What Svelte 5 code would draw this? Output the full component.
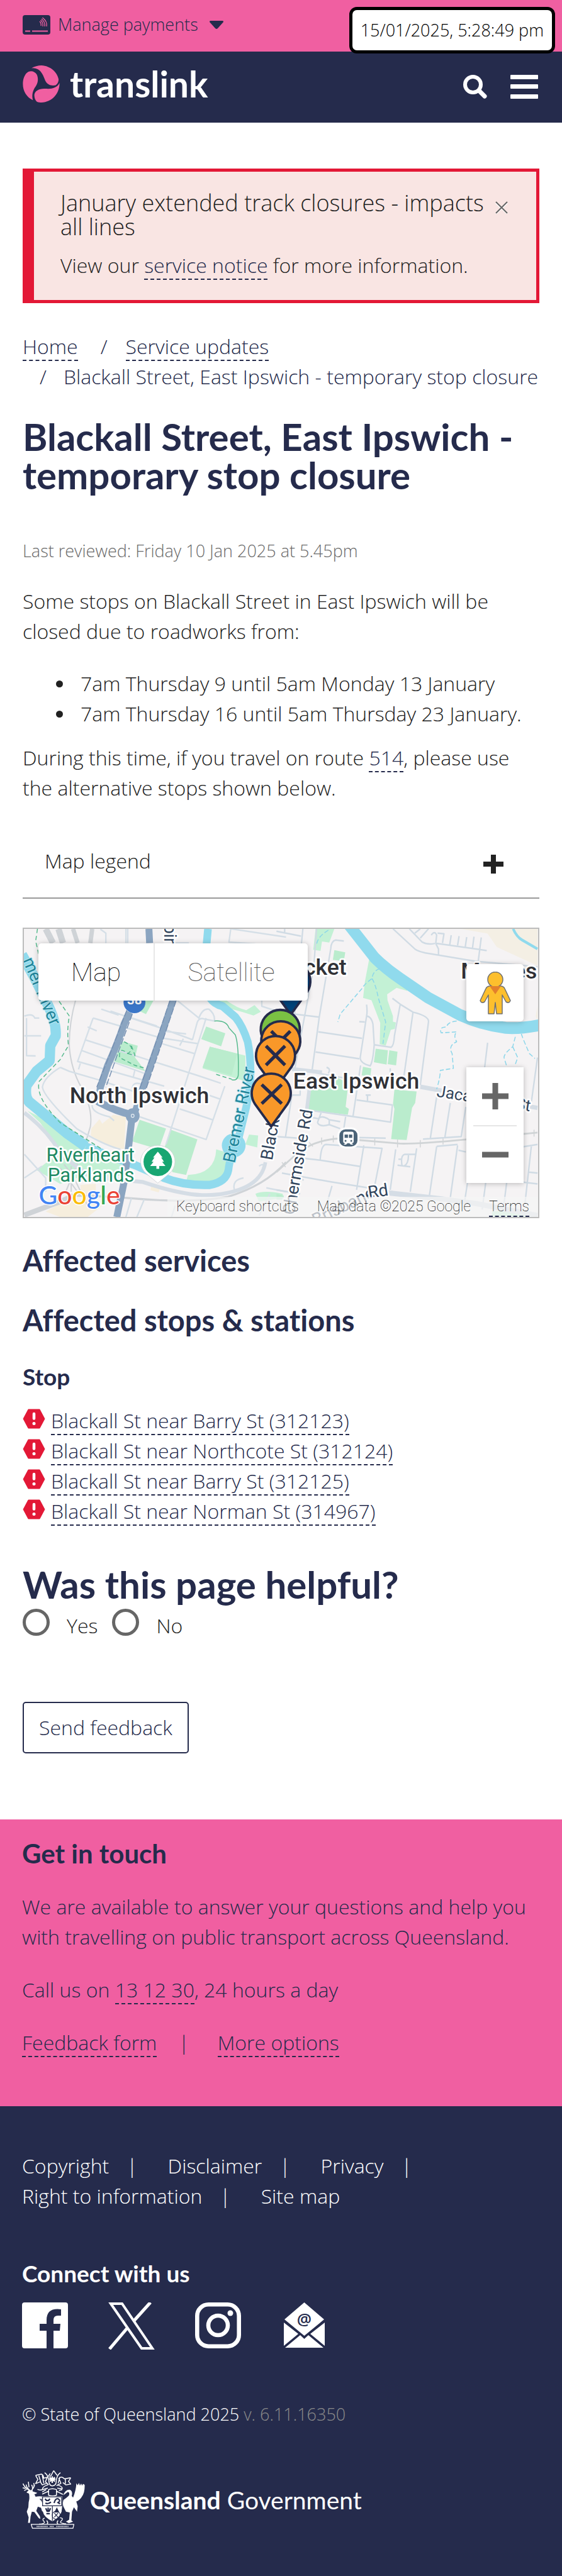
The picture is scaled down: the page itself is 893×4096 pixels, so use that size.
<script>
  let answer = $state('');
  let legendOpen = $state(false);

  const periods = [
    '7am Thursday 9 until 5am Monday 13 January',
    '7am Thursday 16 until 5am Thursday 23 January.'
  ];
  const stops = [
    'Blackall St near Barry St (312123)',
    'Blackall St near Northcote St (312124)',
    'Blackall St near Barry St (312125)',
    'Blackall St near Norman St (314967)'
  ];
  const legal = ['Copyright', 'Disclaimer', 'Privacy', 'Right to information', 'Site map'];
  const pin = 'M0 70 L-34 23 A41 41 0 1 1 34 23 Z';
</script>

<div class="page">
  <div class="topbar">
    <button class="payments" type="button">
      <svg width="44" height="31" viewBox="0 0 44 31" aria-hidden="true">
        <rect width="44" height="31" rx="4" fill="#252b4c" />
        <path d="M4 25.500h8M15 25.500h25" stroke="#f05fa1" stroke-width="2" />
        <path d="M27 10q3 3 2 7M28.500 8q4.500 4 3.500 10M30 6q6 5 5 12M31.500 4q8 6 6.500 14" fill="none" stroke="#f05fa1" stroke-width="1.300" />
      </svg>
      <span>Manage payments</span>
      <svg class="caret" width="22" height="13" viewBox="0 0 22 13" aria-hidden="true">
        <path d="M2 0h18q3 0 1.500 2.500L13 12q-2 2-4 0L.500 2.500Q-1 0 2 0z" fill="#252b4c" />
      </svg>
    </button>
    <div class="timestamp">15/01/2025, 5:28:49 pm</div>
  </div>

  <header class="header">
    <a class="brand" href="#home">
      <svg width="59" height="59" viewBox="48 137 77 78" aria-hidden="true">
        <g fill="#f05fa1">
          <path d="M66 143C72 139 80 137 87 137C106 138 120 151 123 166C123 172 120 178 115 179C106 180 99 177 95 169C91 159 88 150 79 145Q73 142 66 143z" />
          <path d="M55 154C62 146 73 149 77 156C81 164 80 174 75 181C69 189 66 199 69 210C56 204 48 191 48 176C48 166 51 159 55 154z" />
          <path d="M125 174C120 184 109 187 96 186C83 185 73 190 72 199C72 205 74 210 77 213C81 215 84 215 87 215C109 214 125 197 125 174z" />
        </g>
      </svg>
      <span>translink</span>
    </a>
    <div class="tools">
      <button type="button" aria-label="Search">
        <svg width="38" height="38" viewBox="0 0 38 38" aria-hidden="true">
          <circle cx="15.500" cy="15.500" r="12.500" fill="none" stroke="#fff" stroke-width="6" />
          <path d="M25 25L34 34" stroke="#fff" stroke-width="7" stroke-linecap="round" />
        </svg>
      </button>
      <button type="button" aria-label="Menu">
        <svg width="44" height="38" viewBox="0 0 44 38" aria-hidden="true">
          <g fill="#fff"><rect width="44" height="7" rx="1" /><rect y="15" width="44" height="7" rx="1" /><rect y="31" width="44" height="7" rx="1" /></g>
        </svg>
      </button>
    </div>
  </header>

  <main>
    <section class="alert">
      <div class="alert-body">
        <h2>January extended track closures - impacts all lines</h2>
        <p>View our <a href="#notice">service notice</a> for more information.</p>
      </div>
      <button type="button" aria-label="Close">
        <svg width="20" height="20" viewBox="0 0 20 20" aria-hidden="true">
          <path d="M1 3L19 20M19 3L1 20" stroke="#fff" stroke-width="2" />
          <path d="M1 1L19 19M19 1L1 19" stroke="#666" stroke-width="2" />
        </svg>
      </button>
    </section>

    <nav aria-label="Breadcrumb">
      <ol class="crumbs">
        <li><a href="#home">Home</a></li>
        <li><a href="#updates">Service updates</a></li>
        <li>Blackall Street, East Ipswich - temporary stop closure</li>
      </ol>
    </nav>

    <h1>Blackall Street, East Ipswich - temporary stop closure</h1>
    <p class="reviewed">Last reviewed: Friday 10 Jan 2025 at 5.45pm</p>
    <p class="intro">Some stops on Blackall Street in East Ipswich will be closed due to roadworks from:</p>
    <ul class="periods">
      {#each periods as period}
        <li>{period}</li>
      {/each}
    </ul>
    <p class="detour">During this time, if you travel on route <a href="#route514">514</a>, please use the alternative stops shown below.</p>

    <button class="legend" type="button" aria-expanded={legendOpen} onclick={() => (legendOpen = !legendOpen)}>
      <span>Map legend</span>
      <svg width="32" height="30" viewBox="0 0 32 30" aria-hidden="true">
        <path d="M4 15H28M16 4V26" stroke="#222" stroke-width="8" stroke-linecap="square" stroke-linejoin="round" />
      </svg>
    </button>

    <div class="map">
      <svg class="canvas" viewBox="50 1950 1079 605" preserveAspectRatio="xMidYMid slice" role="img" aria-label="Map of North Ipswich and East Ipswich">
        <rect x="50" y="1950" width="1079" height="605" fill="#f5f3f4" />

        <g transform="translate(0 1930) scale(.3827 .4146)" fill="none" stroke-linejoin="round">
          <g fill="#c3f1d5">
            <path d="M150 970L260 1020L370 1100L500 1170L660 1240L740 1290L560 1310L450 1300L330 1340L200 1270L300 1200L290 1120L220 1030z" />
            <path d="M1030 1295Q1180 1290 1185 1165L1240 1180L1260 1290Q1200 1350 1020 1330z" />
            <path d="M1140 400L1240 410Q1300 450 1350 460L1395 435L1430 468L1390 487L1330 470L1250 450z" />
            <path d="M1365 1090L1415 1095L1410 1155L1345 1140z" />
            <path d="M1150 645L1345 690L1345 820L1110 755z" />
            <path d="M1400 1390Q1450 1370 1550 1390V1410L1420 1430z" />
          </g>
          <g fill="#baeccd">
            <path d="M1130 543L1235 577L1212 643L1103 607z" />
            <path d="M665 617L755 640L740 700L798 770L625 720z" />
            <path d="M780 410H842L800 480L765 465z" />
            <path d="M765 1015L910 1060L870 1165L725 1125z" />
            <path d="M935 1065L1082 1115L1020 1295L945 1280L900 1160z" />
            <path d="M1150 645L1300 680L1270 790L1110 750z" />
          </g>
          <path fill="#f6eedd" d="M545 1012L560 1035L620 990L690 1000L680 1165L590 1145L497 1095L500 1060z" />
          <path fill="#f6eedd" d="M440 1345L525 1340V1400L480 1430L560 1450L480 1508H330L250 1480L330 1440L450 1420zM830 1345L880 1352L870 1383L825 1372z" />
          <g stroke="#cfd3d7">
            <path stroke-width="34" d="M250 48L290 120M320 48L345 120" />
            <path stroke-width="24" d="M400 48L425 120M505 48L495 120" />
            <path stroke-width="7" d="M415 405Q375 540 380 650Q390 760 445 850Q510 960 495 1050Q470 1130 450 1180L360 1380M330 1260L440 1400M390 1250V1380M350 1240L400 1300L480 1450" />
            <path stroke-width="26" d="M133 1498L330 1430L400 1400" />
            <path stroke-width="10" d="M400 1400Q560 1400 720 1413Q1050 1440 1250 1405Q1450 1350 1568 1230" />
          </g>
          <g stroke="#d5dfe7" stroke-width="8">
            <path d="M510 500L880 600L1085 630L1010 850M510 500L425 720L900 845M605 465L880 550L1055 610M690 490L860 540M480 545L530 565M465 610L840 720L1080 790L1210 830M450 665L790 780M555 455L650 485M1085 630L1130 500M970 410L1090 500Q1110 450 1145 455Q1180 480 1175 515L1120 505Q1090 495 1080 525L1055 610M985 640L1005 605M1065 680L890 630M1020 580L890 565" />
            <path d="M740 760L730 800M725 855Q730 815 790 840M330 750Q240 800 232 850Q240 900 420 1060Q560 1140 660 1165M330 750L380 770L530 810L760 880M440 730L430 760M505 940Q500 980 600 1000L625 1020" />
            <path d="M765 1000L1130 1115L1232 845M910 1140L1010 850M985 960L1165 1015M1080 870L1205 910M133 490Q180 475 190 500H215M145 500V690L195 692M133 590L225 590" />
            <path d="M550 50L580 70V120M690 48V120M700 48V120M940 120H1035M1265 48L1255 115L1400 125M1265 48L1568 90M133 1190L250 1310V1380M133 1310L230 1250M1435 410V440L1568 480" />
            <path d="M720 1413L690 1508M790 1420L750 1508M960 1450L940 1508M1285 1370Q1270 1320 1335 1310M1460 1360L1568 1380M1420 1500L1480 1390M1440 1260Q1450 1230 1420 1250" />
          </g>
          <path stroke="#d5dde5" stroke-width="20" d="M133 980Q250 1060 330 1180Q440 1290 560 1310L780 1330Q1040 1410 1180 1395Q1430 1370 1455 1230" />
          <g stroke="#90daed" stroke-linejoin="round">
            <path stroke-width="56" d="M120 180Q200 310 260 430Q310 520 305 590L275 640L272 715L200 770L145 840Q135 900 160 925L370 1085L470 1150" />
            <path stroke-width="42" d="M470 1150Q600 1200 740 1245L900 1310Q1010 1350 1150 1345Q1240 1330 1252 1270Q1260 1200 1310 1100L1350 950L1370 850Q1380 720 1358 620Q1330 540 1290 495L1220 440Q1130 420 1115 300L1140 48" />
          </g>
          <ellipse cx="1281" cy="1145" rx="65" ry="60" fill="#90daed" />
          <g stroke="#54b98c" stroke-width="5" stroke-dasharray="22 14">
            <path d="M205 48L195 110L225 230L320 410L380 490Q365 560 375 640Q335 700 330 710L215 820Q190 900 330 1030L560 1165" />
            <path d="M680 620Q750 650 700 680Q650 640 655 700L740 740L800 755M720 640L740 690L700 680M1185 785L1270 810" />
          </g>
          <path stroke="#54b98c" stroke-width="5" d="M1175 515Q1240 510 1255 550L1290 585Q1310 640 1306 790Q1300 820 1270 812" />
          <g stroke="#8ba5c1" stroke-linecap="butt">
            <path stroke-width="38" d="M816 48L820 120M710 470L680 530Q640 640 590 740L550 850L540 925Q640 975 725 990L705 1150L680 1330L640 1508" />
            <path stroke-width="36" d="M950 405L890 570L780 860L735 990" />
          </g>
          <path stroke="#7690b2" stroke-width="5" stroke-dasharray="34 10" d="M695 460L610 665L530 850M725 480L645 680L580 850M932 410L830 690L765 860M966 410L860 700L800 860" />
          <circle cx="727" cy="995" r="38" fill="#8ba5c1" />
          <circle cx="727" cy="995" r="8" fill="#8ba5c1" stroke="#e8eef4" stroke-width="4" />
        </g>

        <g transform="translate(580 1930) scale(.382 .4146)" fill="none" stroke-linejoin="round">
          <path fill="#f4efe4" d="M1010 48L1160 72L1210 140L1434 235V48zM1434 440V510L1424 490z" />
          <g fill="#c3f1d5">
            <path d="M215 48H318L290 118L250 112L242 160L202 154z" />
            <path d="M510 198L570 245L650 310L720 350L718 362L660 347L608 380L610 410L640 490V518L656 522L650 555L628 560L600 640L567 632L570 525L522 410L476 398L485 320z" />
            <path d="M1185 1480L1330 1470L1434 1508H1180z" />
          </g>
          <g fill="#baeccd">
            <path d="M318 156L378 167L370 212L310 205zM545 655L612 663L605 736L535 724zM620 663L665 670L657 740L611 733zM475 747L521 755L515 800L468 790z" />
            <path d="M190 830L330 800L395 830L380 950L398 960L392 990L170 965z" />
            <path d="M648 862L770 872L762 930L745 955L715 1118L630 1113L648 960L640 935zM0 1390L40 1400V1420H0z" />
          </g>
          <g stroke="#d0dbe4" stroke-width="8">
            <path d="M145 48L100 480L235 495M0 60L135 85M45 48V70M220 48L205 240L100 760M370 110L325 105Q300 110 298 150L235 495L195 770M0 490L100 480M230 570L470 603M215 672L455 706M85 755L200 775L380 805" />
            <path d="M495 432Q500 470 495 490L460 700Q460 730 515 742Q530 720 537 635L530 530Q520 490 495 490M455 518L485 520M537 635L630 648Q645 640 648 590L680 430M637 400L680 430L750 470Q840 490 835 520L790 840M750 470L690 860M462 740L420 1000M440 915L637 940L627 1027L170 965M500 890V925M490 890H518M380 1000L370 1060M50 1100L85 890L130 890V850M625 755V800M275 750Q300 755 285 780" />
            <path d="M640 48L760 150Q780 165 850 175L1090 212L1434 240M730 48L800 115Q830 130 870 122M760 70L790 48M790 95L835 48M850 80Q870 55 880 80L875 122L890 150V180M885 70L920 73L912 120M878 122L1155 158M960 80L952 128M1003 85L995 132M1045 90L1037 140M1085 88L1077 145M1125 92L1108 215" />
            <path d="M955 930L925 1105M1040 950L1015 1100L805 1113M880 900L845 1110M1160 625L1120 930M1434 700L1395 960M0 1100L180 1112M270 1140L580 1160L535 1370M480 1145L440 1370M270 1140Q245 1145 240 1220L150 1210M240 1220L460 1252M30 1285L300 1330L640 1380M305 1350L280 1430M0 1370L130 1390M150 1320L90 1310M600 1108L450 1105M655 1165L625 1370M770 1160L735 1380M880 1150L840 1400M995 1145L955 1410M880 1150L995 1140M1000 1170L1040 1178M1050 1330L1035 1420M1150 1330L1130 1470M1265 1330L1250 1440M1400 1150L1365 1440M1300 1160L1434 1140M1385 1280L1434 1285M1340 1330L1434 1340" />
            <path d="M665 1245L735 1253M690 1250Q680 1195 705 1190L765 1190M725 1195Q725 1240 700 1250M670 1215H690M180 1000L230 1010Q250 990 290 1015L350 1025M225 1030Q240 1055 290 1040L350 1060M245 980L225 1030M290 1015V1040" />
          </g>
          <g stroke="#d5dde5">
            <path stroke-width="20" d="M170 965L155 990M180 865L155 1050M85 758L250 775" />
            <path stroke-width="22" d="M790 848L920 870L1434 955" />
            <path stroke-width="26" d="M610 1385L900 1415L1100 1440L1434 1500" />
          </g>
          <path stroke="#d0d4d6" stroke-width="9" d="M0 1280L120 1180Q220 1115 350 1110L680 1136Q780 1138 1040 1115L1434 1080" />
          <path stroke="#d0d4d6" stroke-width="5" d="M248 1105V1140M312 1095V1130M540 1110V1145M665 1115V1155M790 1118V1155M915 1110V1140M1415 1065V1100M30 1230L50 1255M180 1130L200 1150" />
          <path stroke="#90daed" stroke-width="60" d="M395 25L540 195Q600 250 680 300L830 395L1010 485Q1130 535 1260 550Q1340 555 1450 535" />
          <path stroke="#90daed" stroke-width="14" d="M1300 48Q1320 90 1350 105L1434 150" />
          <g stroke="#8bd6ea" stroke-width="5" stroke-dasharray="24 12">
            <path d="M567 250Q530 260 525 300Q480 330 470 350L350 480L337 520M525 300Q545 330 560 400L600 520L585 630M285 55Q220 90 220 135" />
            <path d="M990 515Q940 520 935 545Q890 545 905 575L990 570Q970 590 990 620Q940 640 965 680L972 755L900 765Q900 800 880 860M1345 580Q1360 620 1390 680L1420 705M1312 595L1298 645Q1250 680 1250 700L1265 745M1298 645L1325 700L1310 740" />
          </g>
        </g>

        <g fill="#303136" stroke="#fff" stroke-width="7" stroke-linejoin="round" paint-order="stroke">
          <text x="146" y="2316" font-size="47" font-weight="500">North Ipswich</text>
          <text x="615" y="2285" font-size="47" font-weight="500">East Ipswich</text>
          <text x="727" y="2046" font-size="47" font-weight="500" text-anchor="end">Tivoli Pocket</text>
          <text x="967" y="2055" font-size="47" font-weight="500">Moores</text>
          <g fill="#1d8a63" font-size="41">
            <text x="97" y="2439">Riverheart</text>
            <text x="100" y="2481">Parklands</text>
          </g>
          <g fill="#20859a" stroke="#bfe9f3" stroke-width="3" font-size="36">
            <text transform="translate(492 2443) rotate(-78)">Bremer River</text>
            <text transform="translate(47 2016) rotate(67)">mer River</text>
          </g>
          <g fill="#32455c" font-size="36">
            <text transform="translate(571 2437) rotate(-80)">Blackall St</text>
            <text transform="translate(617 2552) rotate(-80)">Chermside Rd</text>
            <text transform="translate(662 2574) rotate(-26)">Brisbane</text>
            <text transform="translate(774 2516) rotate(-9)">Rd</text>
            <text transform="translate(915 2302) rotate(9)" font-size="34">Jacaranda St</text>
            <text transform="translate(344 1940) rotate(90)">pine</text>
          </g>
        </g>

        <circle cx="282" cy="2104" r="23" fill="#3a76c8" />
        <text x="282" y="2108" fill="#fff" font-size="27" font-weight="700" text-anchor="middle">38</text>

        <path d="M331 2484L307 2464A36 34 0 1 1 355 2464Q340 2476 331 2484z" fill="#fff" stroke="#c9cdd0" stroke-width="1" />
        <ellipse cx="331" cy="2439" rx="30" ry="30" fill="#18a672" />
        <path d="M331 2418L341 2430H338L344 2439H340L347 2448H334V2454H328V2448H315L322 2439H318L324 2430H321z" fill="#fff" />

        <rect x="710" y="2369" width="42" height="40" rx="15" fill="#4c6478" stroke="#fff" stroke-width="4" />
        <path d="M724 2376H738Q742 2376 742 2380V2396Q742 2400 738 2400L741 2403H736L733 2400H729L726 2403H721L724 2400Q720 2400 720 2396V2380Q720 2376 724 2376z" fill="#fff" />
        <path d="M723 2382H730V2389H723zM732 2382H739V2389H732z" fill="#4c6478" />
        <circle cx="725" cy="2395" r="2" fill="#4c6478" /><circle cx="737" cy="2395" r="2" fill="#4c6478" />

        <g stroke="#252b4c" stroke-width="5" stroke-linejoin="round">
          <path d={pin} transform="translate(610 2060)" fill="#00437a" />
          <path d={pin} transform="translate(588 2161)" fill="#7ac143" />
          <g transform="translate(589 2185)"><path d={pin} fill="#f99829" /><path d="M-20 -20L20 20M20 -20L-20 20" stroke-width="7" /></g>
          <g transform="translate(578 2216)"><path d={pin} fill="#f99829" /><path d="M-20 -20L20 20M20 -20L-20 20" stroke-width="7" /></g>
          <g transform="translate(569 2295)"><path d={pin} fill="#f99829" /><path d="M-20 -18L22 22M22 -18L-20 22" stroke-width="7" /></g>
        </g>

        <text x="81" y="2529" font-size="54" font-weight="500" stroke="#fff" stroke-width="4" paint-order="stroke" class="google"><tspan fill="#4285f4">G</tspan><tspan fill="#ea4335">o</tspan><tspan fill="#fbbc05">o</tspan><tspan fill="#4285f4">g</tspan><tspan fill="#34a853">l</tspan><tspan fill="#ea4335">e</tspan></text>
      </svg>

      <div class="maptype">
        <button type="button" class="on">Map</button>
        <button type="button">Satellite</button>
      </div>
      <button class="pegman" type="button" aria-label="Street View">
        <svg width="50" height="68" viewBox="-5 0 50 68" aria-hidden="true">
          <g fill="#fdbf2d" stroke="#707070" stroke-width="1.500" stroke-linejoin="round">
            <path d="M10 23H30Q34 24 35 27L44 46Q42 51 37 48L31 37V67H22L20 49L18 67H9V37L3 48Q-2 51 -4 46L5 27Q6 24 10 23z" />
            <circle cx="20" cy="12.500" r="12" />
          </g>
          <path d="M11 23H29L20 36z" fill="#e3802c" />
        </svg>
      </button>
      <div class="zoom">
        <button type="button" aria-label="Zoom in">
          <svg width="42" height="42" viewBox="0 0 42 42" aria-hidden="true"><path d="M0 21H42M21 0V42" stroke="#666" stroke-width="9" /></svg>
        </button>
        <button type="button" aria-label="Zoom out">
          <svg width="42" height="42" viewBox="0 0 42 42" aria-hidden="true"><path d="M0 21H42" stroke="#666" stroke-width="9" /></svg>
        </button>
      </div>
      <div class="attribution">
        <button type="button">Keyboard shortcuts</button>
        <span>Map data ©2025 Google</span>
        <a href="#terms">Terms</a>
      </div>
    </div>

    <h2 class="section">Affected services</h2>
    <h2 class="section next">Affected stops &amp; stations</h2>
    <h3>Stop</h3>
    <ul class="stops">
      {#each stops as stop}
        <li>
          <svg width="36" height="32" viewBox="0 0 36 32" aria-hidden="true">
            <path d="M9 1H27L35 16L27 31H9L1 16z" fill="#e31836" stroke="#e31836" stroke-linejoin="round" />
            <path d="M18 8V15.500" stroke="#fff" stroke-width="4.500" stroke-linecap="round" />
            <circle cx="18" cy="23.500" r="2.500" fill="#fff" />
          </svg>
          <span><a href="#stop">{stop}</a></span>
        </li>
      {/each}
    </ul>

    <form onsubmit={(event) => event.preventDefault()}>
      <h2 class="question" id="helpful">Was this page helpful?</h2>
      <div class="choices" role="radiogroup" aria-labelledby="helpful">
        <input type="radio" id="helpful-yes" name="helpful" value="yes" bind:group={answer} />
        <label for="helpful-yes">Yes</label>
        <input type="radio" id="helpful-no" name="helpful" value="no" bind:group={answer} />
        <label for="helpful-no">No</label>
      </div>
      <button class="send" type="submit">Send feedback</button>
    </form>
  </main>

  <section class="contact">
    <h2>Get in touch</h2>
    <p>We are available to answer your questions and help you with travelling on public transport across Queensland.</p>
    <p>Call us on <a href="#call">13 12 30</a>, 24 hours a day</p>
    <ul class="barred">
      <li><a href="#feedback">Feedback form</a></li>
      <li><a href="#more">More options</a></li>
    </ul>
  </section>

  <footer>
    <ul class="barred legal">
      {#each legal as item}
        <li><a href="#legal">{item}</a></li>
      {/each}
    </ul>
    <h2>Connect with us</h2>
    <div class="social">
      <a href="#facebook" aria-label="Facebook">
        <svg width="73" height="73" viewBox="0 0 73 73" aria-hidden="true">
          <path fill="#fff" d="M4 0H69Q73 0 73 4V69Q73 73 69 73H50V45H60L61 34H50V28Q50 21 57 21H62V11Q39 8 39 28V34H28V45H39V73H4Q0 73 0 69V4Q0 0 4 0z" />
        </svg>
      </a>
      <a href="#x" aria-label="X">
        <svg width="74" height="75" viewBox="0 0 74 75" aria-hidden="true">
          <path fill="none" stroke="#fff" stroke-width="4" d="M4 2H22L70 73H53z" />
          <path fill="none" stroke="#fff" stroke-width="5" d="M67 0L41 29M30 41L2 74" />
        </svg>
      </a>
      <a href="#instagram" aria-label="Instagram">
        <svg width="73" height="73" viewBox="0 0 73 73" aria-hidden="true">
          <rect x="3.300" y="3.300" width="66.400" height="66.400" rx="18" fill="none" stroke="#fff" stroke-width="6.600" />
          <circle cx="36.500" cy="36.500" r="15.500" fill="none" stroke="#fff" stroke-width="6.600" />
          <circle cx="56" cy="17" r="4.500" fill="#fff" />
        </svg>
      </a>
      <a href="#mail" aria-label="Email">
        <svg width="73" height="73" viewBox="0 0 73 73" aria-hidden="true">
          <path fill="#fff" d="M36.500 0L68 27L36.500 53L5 27zM4 32L27 50L4 69zM69 32V69L46 50zM30 52L36.500 58L43 52L67 72H6z" />
          <text x="36.500" y="36" font-size="26" text-anchor="middle" fill="#252b4c" font-weight="600">@</text>
        </svg>
      </a>
    </div>
    <p class="rights">© State of Queensland 2025 <span>v. 6.11.16350</span></p>
    <div class="gov">
      <svg width="100" height="93" viewBox="24 28 394 370" aria-hidden="true">
        <g fill="#fff">
          <path d="M62 155Q78 148 92 162L118 170Q110 180 100 178L108 195Q125 190 148 193V210L132 208Q150 225 155 250L160 275L150 290L142 265L122 258L112 285L135 318L138 335L128 330L100 292L84 290L76 320L72 360H60L64 325L52 290L62 262L64 230Q72 200 66 175L50 168z" />
          <path d="M418 120Q420 170 400 195Q390 215 365 225L374 255L370 290L350 262L338 290L334 345L345 352L318 362L300 352L320 340L324 295L300 290L285 260Q276 240 284 215Q300 205 318 188Q326 168 312 164L290 180L282 186Q296 148 324 150Q345 160 336 190L345 200Q362 160 366 110L374 122L382 108L388 124L396 112L402 124L408 114z" />
          <path d="M148 192H276V255L272 290Q262 325 214 350Q160 325 154 290L148 255z" />
        </g>
        <g fill="none" stroke="#fff" stroke-width="6" stroke-linejoin="round">
          <path d="M72 155Q52 140 48 118M72 155Q40 140 28 112M44 142L26 138M52 148L36 156M86 158Q92 130 82 120M66 135L62 100M82 155Q105 130 96 108M94 140L102 120" />
          <path d="M108 60L145 52Q160 60 158 78L182 72L170 100L190 120M108 60L122 85L108 112L138 100L150 120L178 110M128 62L140 100M150 60L160 110M330 75L290 82Q270 60 255 80L268 110L240 125M330 75L316 98L330 115L300 120L280 105M296 82V112M262 70L250 110" />
          <path d="M165 42Q190 60 192 100Q195 125 214 126Q238 125 238 100Q240 60 265 42M200 48L188 66M222 30L206 60L196 68M222 30L244 60" />
          <path d="M196 72L230 98M230 72L198 98M213 66V108M194 84H234" stroke-width="9" />
          <path d="M150 150Q130 155 120 148M185 120Q150 130 150 150L185 140M150 165L175 150M245 120Q280 130 276 145L245 140M276 150L255 155M150 178L190 160M280 180L240 160M190 150V185Q214 195 240 185V150Q214 138 190 150z" />
          <path d="M80 370H350L344 395H88zM165 330Q145 335 160 350Q175 365 130 368M262 328Q290 330 268 350Q255 362 300 366" stroke-width="5" />
          <path d="M178 345Q190 360 180 368M250 345Q238 360 250 368" stroke-width="6" />
        </g>
        <g fill="none" stroke="#252b4c">
          <path stroke-width="5" d="M152 196H272V252H152zM214 254V348" />
          <path stroke-width="5" d="M202 155V178M194 165H210M226 155V178M218 165H234M226 298L250 325M250 298L226 325" />
          <path stroke-width="9" d="M168 208L176 218H190L198 208M170 235Q185 245 205 228M225 235Q232 205 250 208Q270 220 250 232L262 240M172 268L182 290M187 264V292M202 268L192 290M176 302H198" />
          <circle cx="238" cy="312" r="25" stroke-width="4" />
        </g>
        <path d="M242 262L258 295H226z" fill="#252b4c" />
        <path d="M115 383H185M198 383H222M240 383H315" stroke="#fff" stroke-width="8" stroke-dasharray="5 4" />
      </svg>
      <span><b>Queensland</b> Government</span>
    </div>
  </footer>
</div>

<style>
  :global(body) {
    margin: 0;
    background: #fff;
  }
  .page {
    font-family: 'Open Sans', sans-serif;
    font-size: 32px;
    line-height: 48px;
    font-weight: 300;
    color: #212121;
  }
  h1, h2, h3, p, ul, ol {
    margin: 0;
    padding: 0;
  }
  ul, ol {
    list-style: none;
  }
  h1, h2, h3 {
    font-family: Lato, sans-serif;
    font-weight: 700;
    font-variant-ligatures: none;
    color: #252b4c;
  }
  button {
    font: inherit;
    color: inherit;
    background: none;
    border: 0;
    padding: 0;
    cursor: pointer;
  }
  svg {
    display: block;
    flex: none;
  }
  a {
    color: #252b4c;
    text-decoration: none;
    border-bottom: 2px dashed #252b4c;
  }

  .topbar {
    position: relative;
    display: flex;
    align-items: center;
    height: 82px;
    padding: 0 36px;
    box-sizing: border-box;
    background: #f05fa1;
  }
  .payments {
    display: flex;
    align-items: center;
    gap: 12px;
    color: #252b4c;
    font-size: 27px;
    line-height: 40px;
    padding-bottom: 4px;
  }
  .caret {
    margin-left: 6px;
  }
  .timestamp {
    position: absolute;
    top: 11px;
    right: 11px;
    z-index: 1;
    box-sizing: border-box;
    padding: 12px 13px;
    border: 5px solid #000;
    border-radius: 12px;
    background: #fff;
    color: #000;
    font-size: 27px;
    line-height: 40px;
  }
  .header {
    display: flex;
    justify-content: space-between;
    align-items: flex-start;
    box-sizing: border-box;
    height: 113px;
    padding: 22px 38px 0 36px;
    background: #252b4c;
  }
  .brand {
    display: flex;
    align-items: center;
    gap: 16px;
    border: 0;
    color: #fff;
    font-family: Lato, sans-serif;
    font-size: 57px;
    font-weight: 700;
    line-height: 59px;
  }
  .tools {
    display: flex;
    align-items: center;
    gap: 37px;
    padding-top: 15px;
  }

  main {
    padding: 73px 36px 105px;
  }
  .alert {
    display: flex;
    align-items: flex-start;
    gap: 8px;
    padding: 31px 45px 31px 42px;
    border: 5px solid #e31836;
    border-left-width: 18px;
    background: #f9e5e3;
  }
  .alert-body {
    flex: 1;
  }
  .alert h2 {
    font: 300 36px/38px 'Open Sans', sans-serif;
    color: #212121;
    margin-bottom: 18px;
  }
  .alert button {
    padding-top: 16px;
  }

  .crumbs {
    display: flex;
    flex-wrap: wrap;
    margin-top: 45px;
    color: #252b4c;
  }
  .crumbs li + li::before {
    content: '/';
    padding: 0 27px;
  }
  .crumbs li:nth-child(2)::before {
    padding: 0 29px 0 36px;
  }
  h1, .question {
    font-size: 60px;
    line-height: 61px;
  }
  h1 {
    margin-top: 41px;
  }
  .reviewed {
    margin-top: 70px;
    font-size: 27px;
    line-height: 40px;
    color: #6b6b6b;
  }
  .intro {
    margin-top: 36px;
  }
  .periods {
    margin-top: 35px;
    padding-left: 53px;
  }
  .periods li {
    display: flex;
    align-items: center;
    gap: 28px;
  }
  .periods li::before {
    content: '';
    width: 11px;
    height: 11px;
    border-radius: 50%;
    background: #212121;
  }
  .detour {
    margin-top: 22px;
  }
  .legend {
    display: flex;
    justify-content: space-between;
    align-items: center;
    width: 100%;
    margin-top: 34px;
    padding: 34px 57px 34px 35px;
    border-bottom: 2px solid #999;
  }
  .legend svg {
    margin-top: 10px;
  }

  .map {
    position: relative;
    height: 458px;
    margin-top: 46px;
    border: 2px solid #bcbcbc;
    overflow: hidden;
    font-family: Roboto, sans-serif;
    font-weight: 100;
    color: #000;
  }
  .canvas {
    width: 100%;
    height: 100%;
    font-weight: 400;
  }
  .google {
    font-family: Lato, sans-serif;
  }
  .maptype {
    position: absolute;
    top: 23px;
    left: 23px;
    display: flex;
    border-radius: 5px;
    background: #fff;
    box-shadow: 0 1px 8px rgba(0, 0, 0, 0.25);
  }
  .maptype button {
    height: 91px;
    padding: 0 52px;
    font-size: 41px;
    color: #565656;
  }
  .maptype .on {
    color: #000;
    border-right: 2px solid #e8e8e8;
  }
  .pegman, .zoom {
    position: absolute;
    right: 23px;
    width: 91px;
    background: #fff;
    box-shadow: 0 1px 8px rgba(0, 0, 0, 0.25);
  }
  .pegman {
    top: 56px;
    display: flex;
    align-items: center;
    justify-content: center;
    height: 91px;
    border-radius: 5px;
  }
  .zoom {
    bottom: 54px;
    display: flex;
    flex-direction: column;
    padding: 0 11px;
    box-sizing: border-box;
  }
  .zoom button {
    display: flex;
    align-items: center;
    justify-content: center;
    height: 92px;
  }
  .zoom button + button {
    border-top: 2px solid #e6e6e6;
  }
  .attribution {
    position: absolute;
    right: 0;
    bottom: 0;
    display: flex;
    gap: 29px;
    padding: 0 14px;
    background: rgba(245, 245, 245, 0.7);
    font-size: 23px;
    line-height: 32px;
  }
  .attribution a {
    color: #000;
    height: 30px;
  }

  .section {
    margin-top: 42px;
    font-size: 47px;
    line-height: 50px;
  }
  .next {
    margin-top: 45px;
  }
  h3 {
    margin-top: 45px;
    font-size: 37px;
    line-height: 40px;
  }
  .stops {
    margin-top: 26px;
  }
  .stops li {
    display: flex;
    gap: 9px;
  }
  .stops svg {
    margin-top: 5px;
  }

  .question {
    margin-top: 62px;
  }
  .choices {
    display: flex;
    align-items: flex-start;
    margin-top: 8px;
  }
  .choices input {
    appearance: none;
    flex: none;
    box-sizing: border-box;
    width: 43px;
    height: 43px;
    margin: 0;
    border: 5px solid #666;
    border-radius: 50%;
  }
  .choices input:checked {
    background: radial-gradient(#252b4c 45%, #fff 50%);
  }
  .choices label {
    padding: 3px 23px 0 27px;
  }
  .send {
    margin-top: 97px;
    padding: 15px 24px;
    border: 2px solid #252b4c;
    border-radius: 5px;
    color: #252b4c;
  }

  .contact {
    padding: 31px 35px 77px;
    background: #f05fa1;
    color: #252b4c;
  }
  .contact h2 {
    font-size: 42px;
    line-height: 46px;
    margin-bottom: 38px;
  }
  .contact p {
    margin-bottom: 36px;
  }
  .barred {
    display: flex;
    flex-wrap: wrap;
  }
  .barred li:not(:last-child)::after {
    content: '|';
    padding: 0 45px 0 34px;
  }

  footer {
    padding: 71px 35px 76px;
    background: #252b4c;
    color: #fff;
  }
  footer a {
    color: #fff;
    border: 0;
  }
  footer .legal li:not(:last-child)::after {
    padding: 0 48px 0 28px;
  }
  footer h2 {
    margin: 79px 0 26px;
    font-size: 37px;
    line-height: 40px;
    color: #fff;
  }
  .social {
    display: flex;
    align-items: flex-start;
    gap: 64px;
    height: 73px;
  }
  .rights {
    margin-top: 85px;
    font-size: 27px;
    line-height: 40px;
  }
  .rights span {
    color: #8b8b8b;
  }
  .gov {
    display: flex;
    align-items: center;
    gap: 8px;
    margin-top: 69px;
    font-family: Lato, sans-serif;
    font-size: 39px;
    font-weight: 400;
  }
</style>
